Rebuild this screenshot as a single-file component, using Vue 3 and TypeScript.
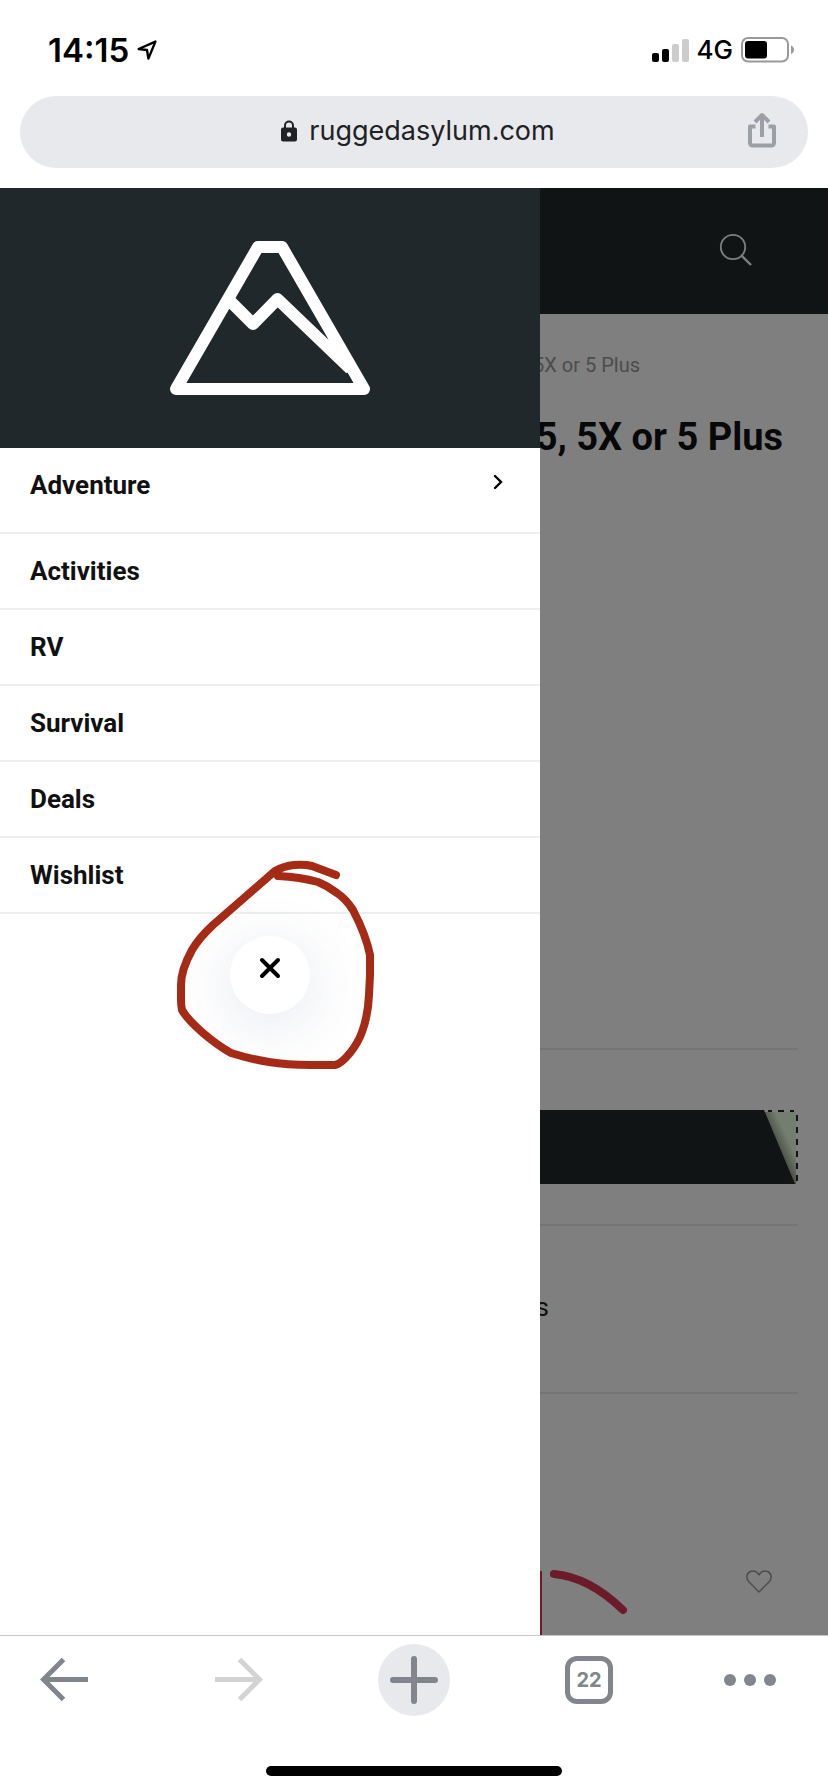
<script setup lang="ts">
interface MenuItem {
  label: string
  expandable?: boolean
}

const menu: MenuItem[] = [
  { label: 'Adventure', expandable: true },
  { label: 'Activities' },
  { label: 'RV' },
  { label: 'Survival' },
  { label: 'Deals' },
  { label: 'Wishlist' },
]
</script>

<template>
  <div class="phone">
    <header class="chrome">
      <div class="status">
        <div class="status-left">
          <span class="time">14:15</span>
          <svg width="20" height="20" viewBox="0 0 20 20" aria-hidden="true">
            <path d="M1.6 9 18.4 1.6 11.4 18.6 10 10Z" fill="none" stroke="#000" stroke-width="2.4" stroke-linejoin="round" />
          </svg>
        </div>
        <div class="status-right">
          <svg width="37" height="23" viewBox="0 0 37 23" aria-hidden="true">
            <rect x="0" y="14" width="7" height="9" rx="2" />
            <rect x="10" y="10" width="7" height="13" rx="2" />
            <rect x="20" y="5" width="7" height="18" rx="2" fill="#ccc" />
            <rect x="30" y="0" width="7" height="23" rx="2" fill="#ccc" />
          </svg>
          <span class="network">4G</span>
          <svg width="54" height="26" viewBox="0 0 54 26" aria-hidden="true">
            <rect x="1" y="1" width="46" height="23.5" rx="6" fill="none" stroke="#999" stroke-width="2" />
            <rect x="4" y="4" width="22" height="17.5" rx="3" />
            <path d="M50 8.5c4 1.6 4 7 0 8.6Z" fill="#999" />
          </svg>
        </div>
      </div>
      <div class="address">
        <a class="url" href="#">
          <svg width="16" height="22" viewBox="0 0 16 22" aria-hidden="true">
            <path d="M4 9V5.5a4 4 0 0 1 8 0V9" fill="none" stroke="#202124" stroke-width="2" />
            <path fill-rule="evenodd" d="M2 7.5h12a2 2 0 0 1 2 2V19.5a2 2 0 0 1-2 2H2a2 2 0 0 1-2-2V9.5a2 2 0 0 1 2-2ZM8 12.3a2.2 2.2 0 1 0 0 4.4a2.2 2.2 0 1 0 0-4.4Z" fill="#202124" />
          </svg>
          <span>ruggedasylum.com</span>
        </a>
        <button class="share" type="button" aria-label="Share">
          <svg width="28" height="36" viewBox="0 0 28 36">
            <path d="M7.5 14.500H2V31a2.500 2.500 0 0 0 2.500 2.500h19A2.500 2.500 0 0 0 26 31V14.500H20.500M14 25V4M7 10l7-7 7 7" fill="none" stroke="#9aa0a6" stroke-width="4" stroke-linejoin="round" />
          </svg>
        </button>
      </div>
    </header>

    <main class="viewport">
      <div class="page">
        <div class="site-bar">
          <button type="button" aria-label="Search">
            <svg width="34" height="34" viewBox="0 0 34 34">
              <circle cx="14" cy="14" r="12.2" fill="none" stroke="#fff" stroke-width="1.8" />
              <path d="M22.8 22.8 32 32" stroke="#fff" stroke-width="2.4" />
            </svg>
          </button>
        </div>
        <div class="content">
          <p class="crumb">5X or 5 Plus</p>
          <h1>5, 5X or 5 Plus</h1>
          <section class="gallery"></section>
          <section class="offer">
            <div class="coupon">
              <svg viewBox="0 0 40 74" width="40" height="74" aria-hidden="true">
                <defs>
                  <linearGradient id="fold" gradientUnits="userSpaceOnUse" x1="18" y1="37" x2="31" y2="31">
                    <stop offset="0" stop-color="#8d9582" />
                    <stop offset="1" stop-color="#e8fde0" />
                  </linearGradient>
                </defs>
                <path d="M5 2h33v72h-2Z" fill="url(#fold)" />
                <path d="M0 0h6l31 74H0Z" fill="#20282b" />
                <path d="M10 1h4m6 0h6m6 0h4" stroke="#20282b" stroke-width="2" />
                <path d="M39 5v66" stroke="#20282b" stroke-width="2" stroke-dasharray="6 6" />
              </svg>
            </div>
          </section>
          <section class="detail"><p>s</p></section>
          <section class="rating">
            <svg width="90" height="66" viewBox="0 0 90 66" aria-hidden="true">
              <path d="M0 2v64" stroke="#d93755" stroke-width="8" />
              <path d="M16 5Q51 8 85 41" fill="none" stroke="#d93755" stroke-width="8" stroke-linecap="round" />
            </svg>
            <button type="button" aria-label="Add to wishlist">
              <svg width="26" height="23" viewBox="0 0 26 23">
                <path d="M13 22 2.800 11.800C-.4 8 .6 3 4.500 1.500 8 .2 11 1.500 13 5 15 1.500 18 .2 21.500 1.500 25.400 3 26.400 8 23.200 11.800Z" fill="none" stroke="#999" stroke-width="1.500" stroke-linejoin="round" />
              </svg>
            </button>
          </section>
        </div>
      </div>
      <div class="shade"></div>

      <aside class="drawer">
        <div class="brand">
          <svg width="200" height="156" viewBox="0 0 200 156" role="img" aria-label="Rugged Asylum">
            <path d="M88 7h24L194 149H6ZM57 58l26 26 24.500-25 73 70" fill="none" stroke="#fff" stroke-width="12" stroke-linejoin="round" />
            <path d="M170 125 179 134 184 143h6l-6-15Z" fill="#fff" />
          </svg>
        </div>
        <nav>
          <a v-for="item in menu" :key="item.label" href="#" :class="{ expandable: item.expandable }">
            <span>{{ item.label }}</span>
            <svg v-if="item.expandable" width="10" height="16" viewBox="0 0 10 16" aria-hidden="true">
              <path d="m2 2 6 6-6 6" fill="none" stroke="#000" stroke-width="2.400" stroke-linecap="round" />
            </svg>
          </a>
        </nav>
        <button class="close" type="button" aria-label="Close menu">
          <svg width="22" height="22" viewBox="0 0 22 22">
            <path d="m3 3 16 16m0-16-16 16" stroke="#000" stroke-width="4" stroke-linecap="round" />
          </svg>
        </button>
        <svg class="marker" width="200" height="216" viewBox="176 856 200 216" aria-hidden="true">
          <path d="M336 875 312 866Q304 864 294 865 284 866 275 871L213 925Q199 938 192 950 181 970 181 985V1000Q181 1005 182 1010 187 1019 203 1033 217 1045 231 1053 250 1059 269 1062 287 1065 310 1065H335Q341 1064 350 1053 358 1043 362 1032 368 1016 369 995L370 975V955Q366 935 353 910 346 899 337 893 328 886 318 882 300 877 278 876" />
        </svg>
      </aside>
    </main>

    <footer class="toolbar">
      <div class="tools">
        <button type="button" aria-label="Back">
          <svg width="48" height="44" viewBox="0 0 48 44">
            <path d="M48 21.500H4M23.500 1.500l-20 20 20 20" fill="none" stroke="#80868b" stroke-width="5" />
          </svg>
        </button>
        <button type="button" aria-label="Forward" disabled>
          <svg width="48" height="44" viewBox="0 0 48 44">
            <path d="M0 21.500h44M24.500 1.500l20 20-20 20" fill="none" stroke="#d3d3d3" stroke-width="5" />
          </svg>
        </button>
        <button type="button" aria-label="New tab">
          <svg width="72" height="72" viewBox="0 0 72 72">
            <circle cx="36" cy="36" r="36" fill="#e8e9ed" />
            <path d="M15 36h42M36 15v42" stroke="#80868b" stroke-width="6" stroke-linecap="round" />
          </svg>
        </button>
        <button type="button" aria-label="22 open tabs"><span class="tabs">22</span></button>
        <button class="more" type="button" aria-label="More">
          <svg width="52" height="12" viewBox="0 0 52 12" fill="#80868b">
            <circle cx="6" cy="6" r="6" />
            <circle cx="26" cy="6" r="6" />
            <circle cx="46" cy="6" r="6" />
          </svg>
        </button>
      </div>
      <div class="home"></div>
    </footer>
  </div>
</template>

<style>
body {
  margin: 0;
}
</style>

<style scoped>
* {
  box-sizing: border-box;
}
svg {
  display: block;
  flex: none;
}
button {
  display: flex;
  align-items: center;
  justify-content: center;
  padding: 0;
  border: 0;
  background: none;
  font: inherit;
}
a {
  color: inherit;
  text-decoration: none;
}
.phone {
  display: flex;
  flex-direction: column;
  min-height: 100vh;
  background: #fff;
  font-family: Roboto, "Liberation Sans", sans-serif;
}
.chrome {
  padding-bottom: 20px;
  font-family: Inter, "Liberation Sans", sans-serif;
}
.status {
  display: flex;
  align-items: center;
  justify-content: space-between;
  height: 96px;
  padding: 4px 33px 0 48px;
}
.status-left,
.status-right {
  display: flex;
  align-items: center;
  gap: 8px;
}
.time {
  font-size: 33px;
  font-weight: 600;
  line-height: 40px;
}
.network {
  font-size: 26px;
  font-weight: 500;
  line-height: 32px;
}
.address {
  display: grid;
  grid-template-columns: 1fr auto 1fr;
  align-items: center;
  height: 72px;
  margin: 0 20px;
  padding: 0 32px 0 40px;
  border-radius: 36px;
  background: #e8e9ed;
}
.url {
  grid-column: 2;
  display: flex;
  align-items: center;
  gap: 12px;
  padding-bottom: 2px;
  color: #202124;
  font-size: 27px;
  line-height: 36px;
}
.share {
  justify-self: end;
  padding-bottom: 4px;
}
.viewport {
  position: relative;
  display: flex;
  flex: 1;
  overflow: hidden;
}
.page {
  display: flex;
  flex: 1;
  flex-direction: column;
}
.site-bar {
  display: flex;
  align-items: center;
  justify-content: flex-end;
  height: 126px;
  padding: 0 75px 2px 0;
  background: #20282b;
}
.content {
  display: flex;
  flex: 1;
  flex-direction: column;
  padding: 36px 30px 0;
}
.crumb {
  margin: 0 158px 0 0;
  color: #999;
  font-size: 20px;
  line-height: 30px;
  text-align: right;
}
h1 {
  margin: 32px 15px 0 0;
  color: #111;
  font-size: 38px;
  font-weight: 700;
  line-height: 50px;
  text-align: right;
}
.gallery,
.offer,
.detail {
  border-bottom: 2px solid #ebebeb;
}
.gallery {
  height: 588px;
}
.offer {
  height: 176px;
  padding-top: 60px;
}
.coupon {
  display: flex;
  justify-content: flex-end;
  height: 74px;
  background: linear-gradient(#20282b, #20282b) left / calc(100% - 40px) 100% no-repeat;
}
.detail {
  display: flex;
  align-items: center;
  height: 168px;
  padding-bottom: 4px;
}
.detail p {
  width: 519px;
  margin: 0;
  color: #222;
  font-size: 26px;
  line-height: 32px;
  text-align: right;
}
.rating {
  display: flex;
  flex: 1;
  align-items: flex-end;
  justify-content: space-between;
  padding: 0 26px 0 508px;
}
.rating button {
  padding-bottom: 42px;
}
.shade {
  position: absolute;
  inset: 0;
  background: rgba(0, 0, 0, 0.5);
}
.drawer {
  position: absolute;
  inset: 0 auto 0 0;
  width: 540px;
  background: #fff;
}
.brand {
  display: flex;
  align-items: center;
  justify-content: center;
  height: 260px;
  background: #20282b;
}
nav a {
  display: flex;
  align-items: center;
  justify-content: space-between;
  padding: 19px 37px 19px 30px;
  border-bottom: 2px solid #eee;
  color: #111;
  font-size: 26px;
  font-weight: 700;
  line-height: 36px;
}
nav a.expandable {
  align-items: flex-start;
  padding-bottom: 29px;
}
nav a.expandable svg {
  margin-top: 7px;
}
.close {
  width: 80px;
  height: 78px;
  margin: 22px auto 0;
  padding-bottom: 14px;
  border-radius: 50%;
  background: #fff;
  box-shadow: 0 10px 60px rgba(60, 80, 125, 0.14);
}
.marker {
  position: absolute;
  top: 668px;
  left: 176px;
  fill: none;
  stroke: #a62b17;
  stroke-width: 8;
  stroke-linecap: round;
  stroke-linejoin: round;
  pointer-events: none;
}
.toolbar {
  height: 157px;
  padding-top: 8px;
  border-top: 1px solid #c8c8c8;
}
.tools {
  display: grid;
  grid-template-columns: repeat(4, 175fr) 104fr;
  padding-left: 24px;
}
.tools button {
  width: 80px;
  height: 72px;
}
.tools .more {
  justify-content: flex-start;
}
.tabs {
  display: flex;
  align-items: center;
  justify-content: center;
  width: 48px;
  height: 48px;
  border: 5px solid #80868b;
  border-radius: 12px;
  color: #80868b;
  font-family: Inter, "Liberation Sans", sans-serif;
  font-size: 20px;
  font-weight: 700;
}
.home {
  width: 296px;
  height: 10px;
  margin: 50px auto 0;
  border-radius: 5px;
  background: #000;
}
</style>
